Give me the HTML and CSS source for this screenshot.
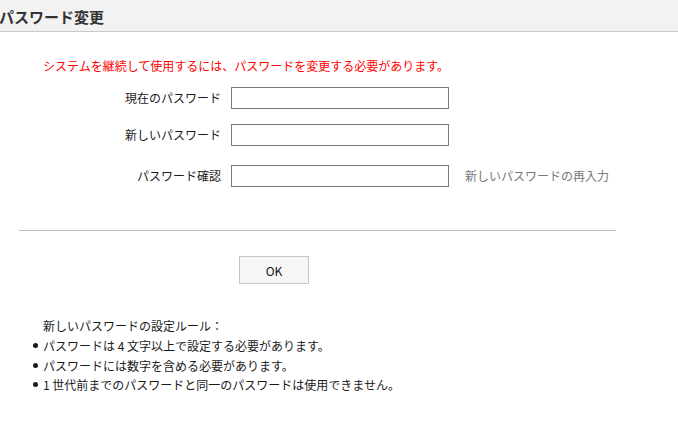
FILE: index.html
```html
<!DOCTYPE html>
<html lang="ja">
<head>
<meta charset="utf-8">
<title>パスワード変更</title>
<link rel="stylesheet" href="styles.css">
</head>
<body>
<header class="page-header">
  <h1 class="page-title">パスワード変更</h1>
</header>
<main class="content">
  <p class="notice">システムを継続して使用するには、パスワードを変更する必要があります。</p>
  <form class="pw-form">
    <div class="row row-1">
      <label class="label" for="cur">現在のパスワード</label>
      <input class="field" id="cur" type="password">
    </div>
    <div class="row row-2">
      <label class="label" for="new">新しいパスワード</label>
      <input class="field" id="new" type="password">
    </div>
    <div class="row row-3">
      <label class="label" for="conf">パスワード確認</label>
      <input class="field" id="conf" type="password">
      <span class="hint">新しいパスワードの再入力</span>
    </div>
    <hr class="sep">
    <div class="actions">
      <button type="button" class="btn">OK</button>
    </div>
  </form>
  <section class="rules">
    <p class="rules-title">新しいパスワードの設定ルール：</p>
    <ul class="rule-list">
      <li>パスワードは 4 文字以上で設定する必要があります。</li>
      <li>パスワードには数字を含める必要があります。</li>
      <li>1 世代前までのパスワードと同一のパスワードは使用できません。</li>
    </ul>
  </section>
</main>
</body>
</html>
```
FILE: styles.css
```css
* { box-sizing: border-box; }
html, body {
  margin: 0;
  padding: 0;
  background: #ffffff;
  font-family: "Noto Sans CJK JP", "Noto Sans", sans-serif;
  font-size: 12px;
  color: #1a1a1a;
}
.page-header {
  height: 32px;
  background: #f2f2f2;
  border-bottom: 1px solid #c9c9c9;
  display: flex;
  align-items: center;
}
.page-title {
  margin: 3px 0 0 -1px;
  font-size: 15px;
  font-weight: bold;
  line-height: 20px;
  color: #333;
}
.content {
  padding-top: 26px;
}
.notice {
  margin: 0 0 0 43px;
  line-height: 16px;
  color: #ff0000;
}
.pw-form {
  margin-top: 13px;
}
.row {
  display: flex;
  align-items: center;
  height: 22px;
}
.row-2 { margin-top: 15px; }
.row-3 { margin-top: 19px; }
.label {
  width: 221px;
  text-align: right;
  padding-right: 0;
  line-height: 16px;
}
.field {
  margin: 0 0 0 10px;
  width: 218px;
  height: 22px;
  border: 1px solid #7a7a7a;
  padding: 0 4px;
  font: inherit;
  background: #fff;
}
.hint {
  margin-left: 16px;
  color: #777777;
  line-height: 16px;
}
.sep {
  margin: 43px 0 0 19px;
  width: 597px;
  border: 0;
  border-top: 1px solid #bdbdbd;
  height: 0;
}
.actions {
  margin-top: 25px;
  padding-left: 239px;
}
.btn {
  width: 70px;
  height: 28px;
  border: 1px solid #c6c6c6;
  background: #f6f6f6;
  font-family: "Noto Sans CJK JP", "Noto Sans", sans-serif;
  font-size: 12px;
  color: #111;
  padding: 0;
}
.rules {
  margin-top: 32px;
}
.rules-title {
  margin: 0 0 0 43px;
  line-height: 19px;
}
.rule-list {
  list-style: none;
  margin: 1px 0 0 0;
  padding: 0 0 0 33px;
}
.rule-list li {
  display: flex;
  align-items: center;
  line-height: 19.5px;
}
.rule-list li::before {
  content: "";
  width: 5px;
  height: 5px;
  border-radius: 50%;
  background: #1a1a1a;
  margin-right: 5px;
  flex: none;
}
```
